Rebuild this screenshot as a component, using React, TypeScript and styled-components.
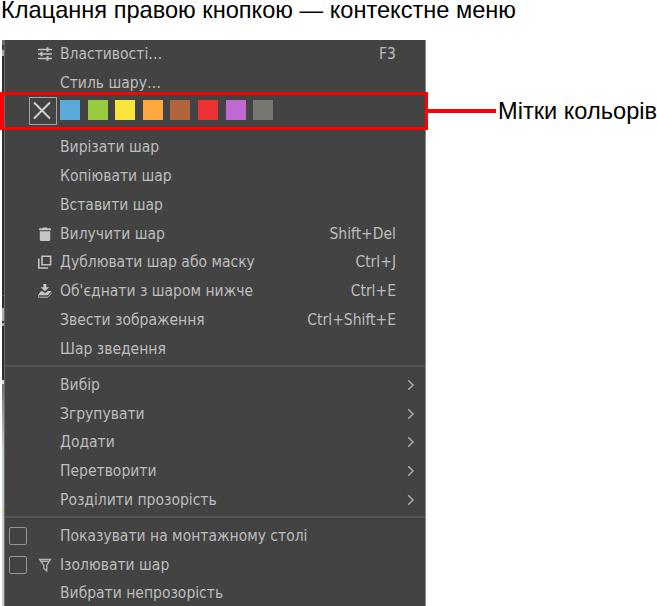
import React from "react";
import styled, { createGlobalStyle } from "styled-components";

const GlobalStyle = createGlobalStyle`
  * { box-sizing: border-box; }
  body { margin: 0; background: #fff; overflow: hidden; }
`;

const Page = styled.main`
  position: relative;
  width: 657px;
  height: 606px;
  overflow: hidden;
  display: flex;
  flex-direction: column;
  font-family: "Liberation Sans", Arial, sans-serif;
`;

const Title = styled.h1`
  margin: 0;
  height: 40px;
  flex: none;
  padding-left: 1px;
  font-size: 23.6px;
  line-height: 20px;
  font-weight: 400;
  white-space: nowrap;
  color: #000;
`;

const Shot = styled.div`
  display: flex;
  width: 424px;
  height: 566px;
  margin-left: 2px;
`;

const Backdrop = styled.div`
  width: 2px;
  flex: none;
  background: linear-gradient(
    #5a7294 0 5px, #333 5px 8px, #444 8px 10px, #aaa 10px 16px, #2e2e2e 16px 255px, #45627a 255px 256px,
    #2e2e2e 256px 268px, #aab0ae 268px 281px, #333 281px 283px, #aaa 283px 286px, #2e2e2e 286px 340px,
    #ddd 340px 344px, #777 344px 350px, #999 370px, #c8cccb 410px 470px, #c0d020 470px 471px, #ccc 471px
  );
`;

const Menu = styled.div`
  flex: 1;
  display: flex;
  flex-direction: column;
  background: #434343;
  border-left: 1px solid #6b6b6b;
  border-right: 1px solid #858585;
  color: #bdbdbd;
  font-family: "DejaVu Sans Condensed", "DejaVu Sans", sans-serif;
  font-stretch: condensed;
  font-size: 15.5px;
  overflow: hidden;
`;

const Row = styled.div<{ $first?: boolean; $sub?: boolean }>`
  flex: none;
  height: 28.75px;
  margin-top: ${(p) => (p.$first ? "-0.75px" : "0")};
  display: grid;
  grid-template-columns: 26px 29px 1fr auto;
  align-items: center;
  padding: 0.8px ${(p) => (p.$sub ? "10px" : "29px")} 0 0;
  line-height: 20px;
  white-space: nowrap;
`;

const Label = styled.span`
  grid-column: 3;
`;

const Shortcut = styled.span`
  grid-column: 4;
`;

const CheckBox = styled.span`
  grid-column: 1;
  width: 18px;
  height: 18px;
  margin-left: 4px;
  border: 1px solid #949494;
  border-radius: 2px;
`;

const IconCell = styled.span`
  grid-column: 2;
  display: flex;
  padding-left: 7px;
  svg { display: block; }
`;

const ArrowCell = styled.span`
  grid-column: 4;
  svg { display: block; }
`;

const Separator = styled.hr`
  flex: none;
  width: 100%;
  height: 7.35px;
  margin: 0;
  border: 0;
  background: linear-gradient(#555, #555) center / 100% 2px no-repeat;
`;

const Swatches = styled.div`
  flex: none;
  height: 35.9px;
  display: flex;
  gap: 7.6px;
  padding: 3.5px 0 0 55px;
`;

const NoColor = styled.span`
  flex: none;
  width: 28px;
  height: 28px;
  margin: -3px -4.6px 0 -31px;
  border: 1px solid #a5a5a5;
  display: flex;
  svg { display: block; }
`;

const Swatch = styled.span<{ $color: string }>`
  flex: none;
  width: 20px;
  height: 20px;
  background: ${(p) => p.$color};
`;

const Highlight = styled.div`
  position: absolute;
  left: 0;
  top: 92px;
  width: 428px;
  height: 38px;
  border: 3px solid #f00;
  border-left-width: 4px;
`;

const Callout = styled.div`
  position: absolute;
  left: 427px;
  top: 96px;
  height: 29px;
  display: flex;
  align-items: center;
  gap: 2px;
  font-size: 23.6px;
  line-height: 28px;
  white-space: nowrap;
`;

const Connector = styled.span`
  width: 69px;
  height: 4px;
  background: #f00;
`;

const icons = {
  properties: (
    <g stroke="#c2c2c2" fill="none">
      <path d="M0 2.5h14M0 7h14M0 11.5h14" strokeWidth="1.4" />
      <path d="M9.5 0.3v4.4M3.5 4.8v4.4M9.5 9.3v4.4" strokeWidth="2" />
    </g>
  ),
  trash: (
    <g fill="#c5c5c5">
      <path d="M1 3.2V2Q1 1.3 2 1.3H4.5L5.2 0.4H8.8L9.5 1.3H12Q13 1.3 13 2V3.2Z" />
      <path d="M1.8 4.3H12.2V12.5Q12.2 14 10.7 14H3.3Q1.8 14 1.8 12.5Z" />
    </g>
  ),
  duplicate: (
    <g stroke="#c2c2c2" fill="none" strokeWidth="1.6">
      <path d="M4 1.2H12.6V9.8H4Z" />
      <path d="M.8 3.5V13H10" />
    </g>
  ),
  merge: (
    <g fill="#c5c5c5">
      <path d="M5.4 0h3v3.2h2.8L6.9 7.2 2.6 3.2h2.8Z" />
      <path d="M2.8 7.2 0 11.3h9.6l4.2-4.4H9.8L7 9.2 4.8 7.2Z" />
      <path d="M.4 11v2.2h9.4l3.8-4.4" fill="none" stroke="#b5b5b5" strokeWidth="1" />
    </g>
  ),
  filter: (
    <path d="M1.6 1.5H12.4L8.8 7.2V12.8L5.8 10.4V7.2ZM3.5 3.3H10.5" fill="none" stroke="#b5b5b5" strokeWidth="1.3" />
  ),
};

type Item = { label: string; keys?: string; icon?: keyof typeof icons; check?: boolean; sub?: boolean };

const head: Item[] = [{ label: "Властивості…", keys: "F3", icon: "properties" }, { label: "Стиль шару…" }];
const layerItems: Item[] = [
  { label: "Вирізати шар" },
  { label: "Копіювати шар" },
  { label: "Вставити шар" },
  { label: "Вилучити шар", keys: "Shift+Del", icon: "trash" },
  { label: "Дублювати шар або маску", keys: "Ctrl+J", icon: "duplicate" },
  { label: "Об'єднати з шаром нижче", keys: "Ctrl+E", icon: "merge" },
  { label: "Звести зображення", keys: "Ctrl+Shift+E" },
  { label: "Шар зведення" },
];
const submenus: Item[] = ["Вибір", "Згрупувати", "Додати", "Перетворити", "Розділити прозорість"].map((label) => ({
  label,
  sub: true,
}));
const toggles: Item[] = [
  { label: "Показувати на монтажному столі", check: true },
  { label: "Ізолювати шар", check: true, icon: "filter" },
  { label: "Вибрати непрозорість" },
];
const colors = ["#5aaadb", "#99cb3e", "#f9e43c", "#ffa840", "#b1643e", "#ec3333", "#c069d3", "#767770"];

function MenuRow({ item, first }: { item: Item; first?: boolean }) {
  return (
    <Row $first={first} $sub={item.sub}>
      {item.check && <CheckBox />}
      {item.icon && (
        <IconCell>
          <svg width="14" height="14" viewBox="0 0 14 14">{icons[item.icon]}</svg>
        </IconCell>
      )}
      <Label>{item.label}</Label>
      {item.keys && <Shortcut>{item.keys}</Shortcut>}
      {item.sub && (
        <ArrowCell>
          <svg width="8" height="12" viewBox="0 0 8 12">
            <path d="M1.2 1.2 6 6 1.2 10.8" fill="none" stroke="#aaa" strokeWidth="1.5" />
          </svg>
        </ArrowCell>
      )}
    </Row>
  );
}

export default function App() {
  return (
    <>
      <GlobalStyle />
      <Page>
        <Title>Клацання правою кнопкою — контекстне меню</Title>
        <Shot>
          <Backdrop />
          <Menu>
            {head.map((item, i) => <MenuRow key={item.label} item={item} first={i === 0} />)}
            <Swatches>
              <NoColor>
                <svg width="26" height="26" viewBox="0 0 26 26">
                  <path d="M4 4.5 20 20.5M20 4.5 4 20.5" fill="none" stroke="#d0d0d0" strokeWidth="2" />
                </svg>
              </NoColor>
              {colors.map((c) => <Swatch key={c} $color={c} />)}
            </Swatches>
            {layerItems.map((item) => <MenuRow key={item.label} item={item} />)}
            <Separator />
            {submenus.map((item) => <MenuRow key={item.label} item={item} />)}
            <Separator />
            {toggles.map((item) => <MenuRow key={item.label} item={item} />)}
          </Menu>
        </Shot>
        <Highlight />
        <Callout>
          <Connector />
          <span>Мітки кольорів</span>
        </Callout>
      </Page>
    </>
  );
}
